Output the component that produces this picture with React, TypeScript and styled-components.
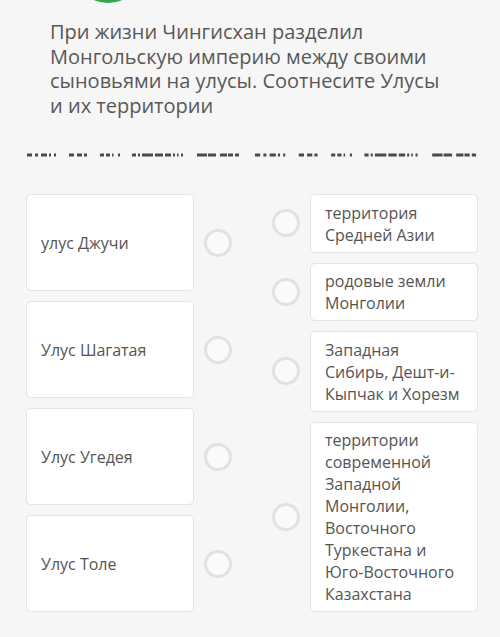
import styled, { createGlobalStyle } from "styled-components"

const GlobalStyle = createGlobalStyle`
  html, body {
    margin: 0;
    padding: 0;
    background: #f6f6f6;
  }
  body {
    font-family: "Open Sans", "Noto Sans", sans-serif;
    color: #555;
  }
`

const dashes: [number, number][] = [
  [0, 5], [8, 3], [14, 6], [22, 2], [27, 2], [42, 5], [50, 5], [57, 3],
  [73, 4], [79, 4], [85, 1.5], [91, 2], [105, 4], [111, 2], [115, 11],
  [128, 8], [138, 6], [146, 2], [150, 1.5], [154, 2], [170, 10], [181, 8],
  [193, 7], [201, 5], [208, 4],
]

const leftItems = ["улус Джучи", "Улус Шагатая", "Улус Угедея", "Улус Толе"]

const rightItems = [
  "территория Средней Азии",
  "родовые земли Монголии",
  "Западная Сибирь, Дешт-и-Кыпчак и Хорезм",
  "территории современной Западной Монголии, Восточного Туркестана и Юго-Восточного Казахстана",
]

const Redacted = ({ width }: { width: number }) => (
  <svg width={width} height={4} viewBox="0 0 213 4" preserveAspectRatio="none">
    {dashes.map(([x, w], i) => (
      <rect key={i} x={x} y={0.5} width={w} height={3} fill="#4a4a4a" />
    ))}
  </svg>
)

export default function App() {
  return (
    <Page>
      <GlobalStyle />
      <Badge />
      <Question>
        При жизни Чингисхан разделил Монгольскую империю между своими
        сыновьями на улусы. Соотнесите Улусы и их территории
      </Question>
      <DashRow>
        <Redacted width={213} />
        <Redacted width={222} />
      </DashRow>
      <Board>
        <Column>
          {leftItems.map((t) => (
            <Pair key={t}>
              <LeftCard>{t}</LeftCard>
              <Dot />
            </Pair>
          ))}
        </Column>
        <Column>
          {rightItems.map((t) => (
            <Pair key={t}>
              <Dot />
              <RightCard>{t}</RightCard>
            </Pair>
          ))}
        </Column>
      </Board>
    </Page>
  )
}

const Page = styled.div`
  width: 500px;
  height: 637px;
  overflow: hidden;
  display: flex;
  flex-direction: column;
`

const Badge = styled.div`
  width: 72px;
  height: 72px;
  border-radius: 50%;
  background: #2fa64f;
  margin: -69px 0 0 72px;
  flex-shrink: 0;
`

const Question = styled.p`
  margin: 17px 50px 0 50px;
  font-size: 20px;
  line-height: 24.5px;
  color: #585858;
`

const DashRow = styled.div`
  display: flex;
  gap: 15px;
  padding-left: 27px;
  margin-top: 35px;
  height: 4px;
  svg {
    display: block;
  }
`

const Board = styled.div`
  display: grid;
  grid-template-columns: 206px 206px;
  column-gap: 40px;
  padding: 0 22px 0 26px;
  margin-top: 37px;
`

const Column = styled.div`
  display: flex;
  flex-direction: column;
  gap: 10px;
`

const Pair = styled.div`
  display: flex;
  align-items: center;
  gap: 10px;
`

const Card = styled.div`
  flex: 1;
  background: #fff;
  border: 1px solid #e4e4e4;
  border-radius: 5px;
  font-size: 16px;
  line-height: 22px;
  color: #555;
`

const LeftCard = styled(Card)`
  height: 97px;
  box-sizing: border-box;
  display: flex;
  align-items: center;
  padding: 0 14px;
`

const RightCard = styled(Card)`
  padding: 6.5px 14px 6px;
`

const Dot = styled.div`
  width: 28px;
  height: 28px;
  box-sizing: border-box;
  border-radius: 50%;
  border: 3px solid #e2e2e2;
  background: #fafafa;
  flex-shrink: 0;
`
